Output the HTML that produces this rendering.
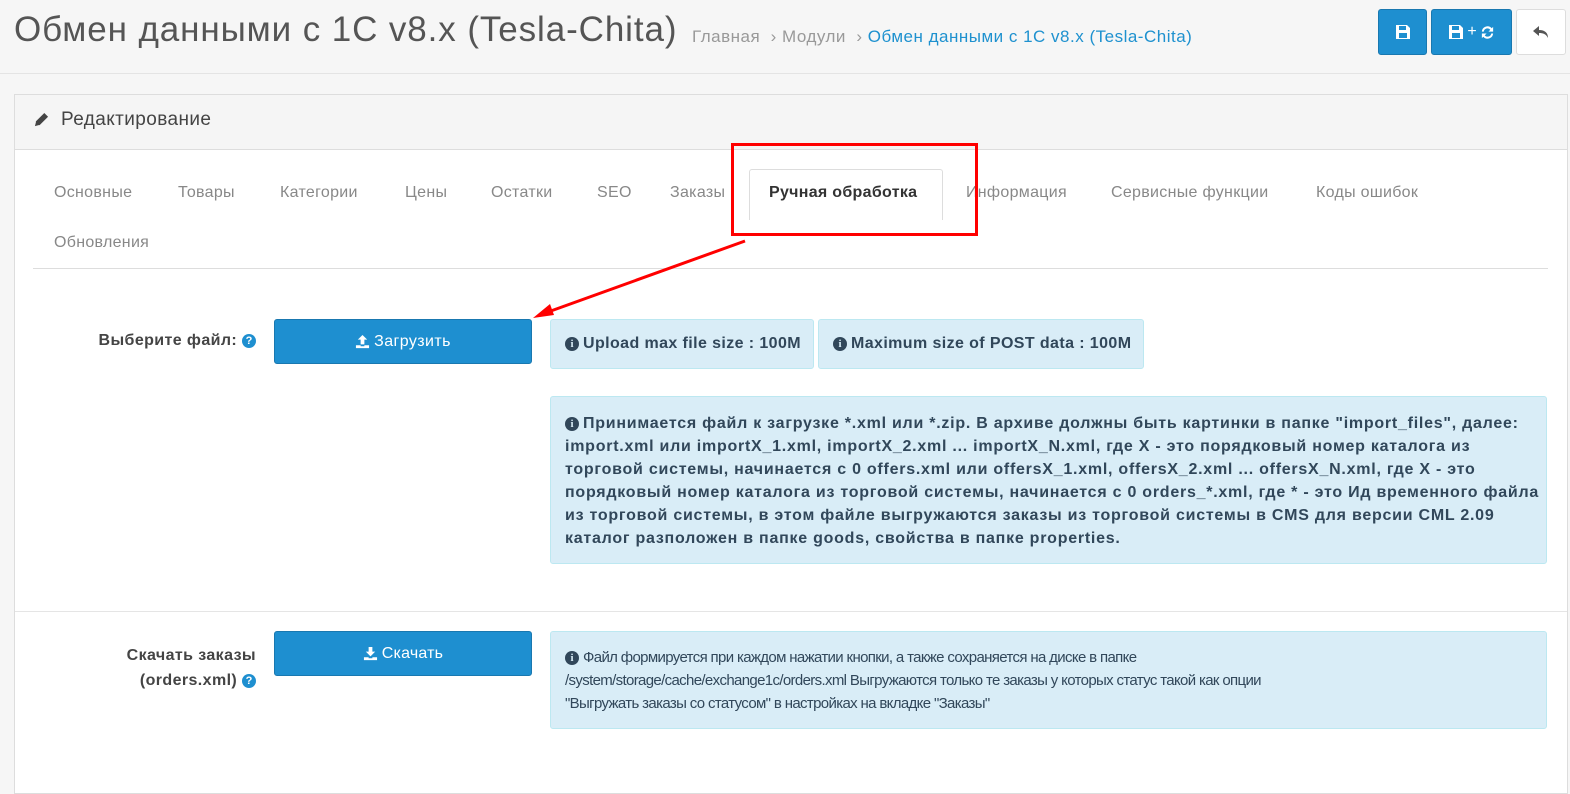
<!DOCTYPE html>
<html><head><meta charset="utf-8"><style>
*{box-sizing:border-box;margin:0;padding:0}
body{width:1570px;height:768px;overflow:hidden;background:#f6f6f6;font-family:"Liberation Sans","DejaVu Sans",sans-serif;position:relative;color:#333}
.a{position:absolute}
.title{left:14px;top:10px;font-size:35px;color:#555;white-space:nowrap;letter-spacing:.9px}
.bc{left:692px;top:27px;font-size:17px;color:#999;white-space:nowrap;letter-spacing:.5px}
.bc span{color:#1e91cf}
.btn{position:absolute;background:#1e8fd0;border:1px solid #1978b0;border-radius:3px;color:#fff;display:flex;align-items:center;justify-content:center}
.hdrline{left:0;top:73px;width:1570px;height:1px;background:#e4e4e4}
.panel{left:14px;top:94px;width:1554px;height:700px;background:#fff;border:1px solid #ddd}
.ph{left:15px;top:95px;width:1552px;height:55px;background:#f5f5f5;border-bottom:1px solid #ddd}
.tab{position:absolute;font-size:16px;color:#888;white-space:nowrap;letter-spacing:.3px;top:184px}
.alert{position:absolute;background:#d9edf7;border:1px solid #bce8f1;border-radius:3px;color:#31475a;font-size:16px;line-height:23px;white-space:nowrap}
.b{font-weight:bold}
.lbl{position:absolute;font-size:16px;font-weight:bold;color:#444;text-align:right;line-height:25px;letter-spacing:.4px}
.q{display:inline-block;width:14px;height:14px;border-radius:50%;background:#1e8fd0;color:#fff;font-size:11px;line-height:14px;text-align:center;vertical-align:1px;letter-spacing:0}
.i{display:inline-block;width:14px;height:14px;border-radius:50%;background:#31475a;color:#d9edf7;font-size:11px;line-height:14px;text-align:center;font-weight:bold;font-family:"Liberation Serif",serif;vertical-align:1px;margin-right:4px;letter-spacing:0}
</style></head><body>
<div class="a title">Обмен данными с 1С v8.x (Tesla-Chita)</div>
<div class="a bc">Главная &nbsp;› Модули &nbsp;› <span>Обмен данными с 1С v8.x (Tesla-Chita)</span></div>
<div class="btn" style="left:1378px;top:9px;width:49px;height:46px"><svg width="16" height="16" viewBox="0 0 16 16"><path d="M2 1h10l3 3v11H1V1z M4 2v4h7V2z M4 9v5h8V9z" fill="#fff" fill-rule="evenodd"/></svg></div>
<div class="btn" style="left:1431px;top:9px;width:81px;height:46px;font-size:16px;gap:3px"><svg width="16" height="16" viewBox="0 0 16 16"><path d="M2 1h10l3 3v11H1V1z M4 2v4h7V2z M4 9v5h8V9z" fill="#fff" fill-rule="evenodd"/></svg>+<svg width="15" height="15" viewBox="0 0 16 16"><path d="M14 2v5H9l2-2a4 4 0 0 0-7 2H2a6 6 0 0 1 10.5-3.5z M2 14V9h5l-2 2a4 4 0 0 0 7-2h2a6 6 0 0 1-10.5 3.5z" fill="#fff"/></svg></div>
<div class="a" style="left:1516px;top:9px;width:50px;height:46px;background:#fff;border:1px solid #ddd;border-radius:3px;display:flex;align-items:center;justify-content:center"><svg width="18" height="16" viewBox="0 0 18 16"><path d="M7 2L1 7l6 5V9c4 0 7 1 9 5 0-5-3-8-9-8z" fill="#555"/></svg></div>
<div class="a hdrline"></div>
<div class="a panel"></div>
<div class="a ph"></div>
<svg class="a" style="left:34px;top:112px" width="15" height="15" viewBox="0 0 16 16"><path d="M11 1l4 4-9 9H2v-4z M1 15l1-4 3 3z" fill="#444"/></svg>
<div class="a" style="left:61px;top:109px;font-size:19px;color:#444;letter-spacing:.4px">Редактирование</div>
<div class="tab" style="left:54px">Основные</div>
<div class="tab" style="left:178px">Товары</div>
<div class="tab" style="left:280px">Категории</div>
<div class="tab" style="left:405px">Цены</div>
<div class="tab" style="left:491px">Остатки</div>
<div class="tab" style="left:597px">SEO</div>
<div class="tab" style="left:670px">Заказы</div>
<div class="a" style="left:749px;top:169px;width:194px;height:100px;background:#fff;border:1px solid #ddd;border-bottom:none;border-radius:3px 3px 0 0"></div>
<div class="tab" style="left:769px;color:#333;font-weight:bold">Ручная обработка</div>
<div class="tab" style="left:966px">Информация</div>
<div class="tab" style="left:1111px">Сервисные функции</div>
<div class="tab" style="left:1316px">Коды ошибок</div>
<div class="tab" style="left:54px;top:234px">Обновления</div>
<div class="a" style="left:33px;top:268px;width:1515px;height:1px;background:#ddd"></div>
<div class="a" style="left:749px;top:220px;width:194px;height:48px;background:#fff"></div>

<div class="lbl" style="left:40px;top:328px;width:216px">Выберите файл: <span class="q">?</span></div>
<div class="btn" style="left:274px;top:319px;width:258px;height:45px;font-size:16px;letter-spacing:.4px"><svg width="15" height="15" viewBox="0 0 16 16" style="margin-right:4px"><path d="M8 1l5 5H10v5H6V6H3z M1 12h5v1h4v-1h5v3H1z" fill="#fff"/></svg>Загрузить</div>
<div class="alert b" style="left:550px;top:319px;width:264px;height:50px;padding:12px 14px;letter-spacing:.4px"><span class="i">i</span>Upload max file size : 100M</div>
<div class="alert b" style="left:818px;top:319px;width:326px;height:50px;padding:12px 14px;letter-spacing:.4px"><span class="i">i</span>Maximum size of POST data : 100M</div>
<div class="alert b" style="left:550px;top:396px;width:997px;height:168px;padding:15px 14px 0 14px;letter-spacing:.75px;overflow:hidden"><span class="i">i</span>Принимается файл к загрузке *.xml или *.zip. В архиве должны быть картинки в папке "import_files", далее:<br>import.xml или importX_1.xml, importX_2.xml ... importX_N.xml, где X - это порядковый номер каталога из<br>торговой системы, начинается с 0 offers.xml или offersX_1.xml, offersX_2.xml ... offersX_N.xml, где X - это<br>порядковый номер каталога из торговой системы, начинается с 0 orders_*.xml, где * - это Ид временного файла<br>из торговой системы, в этом файле выгружаются заказы из торговой системы в CMS для версии CML 2.09<br>каталог разположен в папке goods, свойства в папке properties.</div>
<div class="a" style="left:15px;top:611px;width:1552px;height:1px;background:#e5e5e5"></div>
<div class="lbl" style="left:40px;top:643px;width:216px">Скачать заказы<br>(orders.xml) <span class="q">?</span></div>
<div class="btn" style="left:274px;top:631px;width:258px;height:45px;font-size:16px;letter-spacing:.2px"><svg width="15" height="15" viewBox="0 0 16 16" style="margin-right:4px"><path d="M6 1h4v5h3l-5 5-5-5h3z M1 12h5v1h4v-1h5v3H1z" fill="#fff"/></svg>Скачать</div>
<div class="alert" style="left:550px;top:631px;width:997px;height:98px;padding:14px 14px 0 14px;font-size:15px;letter-spacing:-.65px"><span class="i">i</span>Файл формируется при каждом нажатии кнопки, а также сохраняется на диске в папке<br>/system/storage/cache/exchange1c/orders.xml Выгружаются только те заказы у которых статус такой как опции<br>"Выгружать заказы со статусом" в настройках на вкладке "Заказы"</div>

<div class="a" style="left:731px;top:143px;width:247px;height:93px;border:3px solid #f00"></div>
<svg class="a" style="left:0;top:0" width="1570" height="768"><line x1="745" y1="241" x2="548" y2="312" stroke="#f00" stroke-width="3"/><path d="M533 318l17-14 4 11z" fill="#f00"/></svg>
</body></html>
